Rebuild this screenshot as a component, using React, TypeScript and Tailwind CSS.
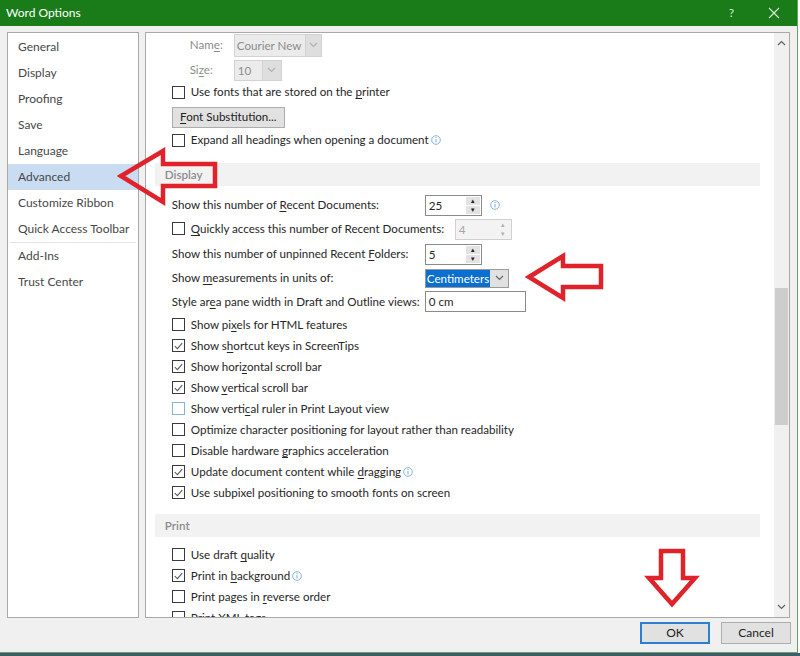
import type { ReactNode } from 'react';

const NAV_TOP = ['General', 'Display', 'Proofing', 'Save', 'Language', 'Advanced', 'Customize Ribbon', 'Quick Access Toolbar'];
const NAV_BOTTOM = ['Add-Ins', 'Trust Center'];

const Info = () => (
  <svg width="10" height="10" viewBox="0 0 10 10" className="ml-[2px] inline-block align-[-1px]">
    <circle cx="5" cy="5" r="4.3" fill="none" stroke="#7aa7d6" strokeWidth="0.9" />
    <path d="M5 4.2v3.2" stroke="#7aa7d6" strokeWidth="1" />
    <circle cx="5" cy="2.7" r="0.6" fill="#7aa7d6" />
  </svg>
);

const Box = ({ checked = false, blue = false }: { checked?: boolean; blue?: boolean }) => (
  <span
    className={`flex size-[13px] shrink-0 items-center justify-center border bg-white ${
      blue ? 'border-[#86b6cc]' : 'border-[#3a3a3a]'
    }`}
  >
    {checked && (
      <svg width="9" height="8" viewBox="0 0 9 8">
        <path d="M0.8 4.2 L3.4 6.6 L8.2 1.2" fill="none" stroke="#5a5a5a" strokeWidth="1.1" />
      </svg>
    )}
  </span>
);

const CheckRow = ({
  children,
  checked,
  blue,
  info,
}: {
  children: ReactNode;
  checked?: boolean;
  blue?: boolean;
  info?: boolean;
}) => (
  <div className="flex h-[21px] shrink-0 items-center gap-[6px] pl-[26px]">
    <Box checked={checked} blue={blue} />
    <span className="whitespace-nowrap">
      {children}
      {info && <Info />}
    </span>
  </div>
);

const Spin = ({ value, disabled = false }: { value: string; disabled?: boolean }) => (
  <div
    className={`flex h-[21px] w-[57px] shrink-0 border ${
      disabled ? 'border-[#d0d0d0] bg-[#f3f3f3] text-[#a6a6a6]' : 'border-[#8a8a8a] bg-white'
    }`}
  >
    <span className="flex-1 pl-[3px] leading-[19px]">{value}</span>
    <div className="flex w-[16px] flex-col gap-[1px] p-[1px]">
      <span
        className={`flex flex-1 items-center justify-center text-[6px] leading-none ${
          disabled ? 'bg-[#f3f3f3] text-[#b0b0b0]' : 'bg-[#e3e3e3] text-[#222]'
        }`}
      >
        ▲
      </span>
      <span
        className={`flex flex-1 items-center justify-center text-[6px] leading-none ${
          disabled ? 'bg-[#f3f3f3] text-[#b0b0b0]' : 'bg-[#e3e3e3] text-[#222]'
        }`}
      >
        ▼
      </span>
    </div>
  </div>
);

const Chevron = ({ color = '#555', up = false }: { color?: string; up?: boolean }) => (
  <svg width="9" height="6" viewBox="0 0 9 6">
    <path d={up ? 'M1 5 L4.5 1.5 L8 5' : 'M1 1 L4.5 4.5 L8 1'} fill="none" stroke={color} strokeWidth="1.2" />
  </svg>
);

const Header = ({ children }: { children: ReactNode }) => (
  <div className="ml-[9px] mr-[14px] flex h-[23px] items-center bg-[#f2f2f2] pl-[10px] font-semibold text-[#8b8b8b]">
    {children}
  </div>
);

export default function App() {
  return (
    <div className="flex h-[656px] w-[800px] flex-col bg-white font-[family-name:Lato,'Noto_Sans',sans-serif] text-[11.6px] text-[#262626]">
      <div className="flex h-[653px] w-[798px] flex-col border-b border-r border-[#63a463] bg-[#f0f0f0]">
        {/* Title bar */}
        <div className="flex h-[26px] shrink-0 items-center bg-[#197c19] pl-[6px] pr-[17px] text-[12px] text-white">
          <span className="flex-1">Word Options</span>
          <span className="mr-[34px] text-[12px] text-[#d6ecd6]">?</span>
          <svg width="12" height="12" viewBox="0 0 12 12">
            <path d="M1 1 L11 11 M11 1 L1 11" stroke="#d6ecd6" strokeWidth="1.2" />
          </svg>
        </div>

        <div className="flex h-[592px] shrink-0 gap-[6px] px-[7px] pt-[6px]">
          {/* Left nav */}
          <div className="flex w-[132px] flex-col border border-[#a9a9a9] bg-white pt-[1px] text-[12px] text-[#474747]">
            {NAV_TOP.map((item) => (
              <div
                key={item}
                className={`flex h-[26px] shrink-0 items-center pl-[10px] ${item === 'Advanced' ? 'bg-[#c9dcf2]' : ''}`}
              >
                {item}
              </div>
            ))}
            <div className="mx-[2px] h-[1px] shrink-0 bg-[#e3e3e3]" />
            {NAV_BOTTOM.map((item) => (
              <div key={item} className="flex h-[26px] shrink-0 items-center pl-[10px]">
                {item}
              </div>
            ))}
          </div>

          {/* Content */}
          <div className="flex w-[646px] overflow-hidden border border-[#a9a9a9] bg-white">
            <div className="flex min-w-0 flex-1 flex-col">
              <div className="flex h-[24px] shrink-0 items-center">
                <span className="w-[78px] pr-[1px] text-right text-[#8c8c8c]">
                  Nam<u className="underline-offset-2">e</u>:
                </span>
                <div className="ml-[10px] flex h-[23px] w-[88px] border border-[#d2d2d2] bg-[#ebebeb] text-[#8c8c8c]">
                  <span className="flex-1 whitespace-nowrap pl-[2px] leading-[21px]">Courier New</span>
                  <span className="flex w-[16px] items-center justify-center border-l border-[#d2d2d2] bg-[#dedede]">
                    <Chevron color="#b0b0b0" />
                  </span>
                </div>
              </div>
              <div className="flex h-[26px] shrink-0 items-center">
                <span className="w-[78px] pr-[11px] text-right text-[#8c8c8c]">
                  Si<u className="underline-offset-2">z</u>e:
                </span>
                <div className="ml-[10px] flex h-[21px] w-[48px] border border-[#d2d2d2] bg-[#ebebeb] text-[#8c8c8c]">
                  <span className="flex-1 pl-[3px] leading-[19px]">10</span>
                  <span className="flex w-[19px] items-center justify-center border-l border-[#d2d2d2] bg-[#dedede]">
                    <Chevron color="#b0b0b0" />
                  </span>
                </div>
              </div>
              <div className="flex h-[18px] shrink-0 items-center gap-[6px] pl-[26px]">
                <Box />
                <span className="whitespace-nowrap">
                  Use fonts that are stored on the <u className="underline-offset-2">p</u>rinter
                </span>
              </div>
              <div className="flex h-[32px] shrink-0 items-center pl-[26px]">
                <button
                  type="button"
                  className="h-[21px] w-[113px] border border-[#adadad] bg-[#e1e1e1] text-center text-[#222]"
                >
                  <span className="whitespace-nowrap">
                    <u className="underline-offset-2">F</u>ont Substitution...
                  </span>
                </button>
              </div>
              <div className="flex h-[14px] shrink-0 items-center gap-[6px] pl-[26px]">
                <Box />
                <span className="whitespace-nowrap">
                  Expand all headings when opening a document
                  <Info />
                </span>
              </div>

              <div className="mt-[16px] shrink-0">
                <Header>Display</Header>
              </div>

              <div className="mt-[7px] flex h-[24px] shrink-0 items-center pl-[26px]">
                <span className="w-[253px] whitespace-nowrap">
                  Show this number of <u className="underline-offset-2">R</u>ecent Documents:
                </span>
                <Spin value="25" />
                <span className="ml-[6px]">
                  <Info />
                </span>
              </div>
              <div className="flex h-[24px] shrink-0 items-center pl-[26px]">
                <div className="flex w-[283px] items-center gap-[6px]">
                  <Box />
                  <span className="whitespace-nowrap">
                    <u className="underline-offset-2">Q</u>uickly access this number of Recent Documents:
                  </span>
                </div>
                <Spin value="4" disabled />
              </div>
              <div className="flex h-[26px] shrink-0 items-center pl-[26px]">
                <span className="w-[253px] whitespace-nowrap">
                  Show this number of unpinned Recent <u className="underline-offset-2">F</u>olders:
                </span>
                <Spin value="5" />
              </div>
              <div className="flex h-[22px] shrink-0 items-center pl-[26px]">
                <span className="w-[253px] whitespace-nowrap">
                  Show <u className="underline-offset-2">m</u>easurements in units of:
                </span>
                <div className="flex h-[19px] w-[84px] border border-[#9a9a9a] bg-white">
                  <span className="whitespace-nowrap bg-[#0a6fce] px-[1px] leading-[17px] text-white">Centimeters</span>
                  <span className="flex flex-1 items-center justify-center bg-[#e1e1e1]">
                    <Chevron color="#666" />
                  </span>
                </div>
              </div>
              <div className="flex h-[25px] shrink-0 items-center pl-[26px]">
                <span className="w-[253px] whitespace-nowrap">
                  Style ar<u className="underline-offset-2">e</u>a pane width in Draft and Outline views:
                </span>
                <div className="h-[21px] w-[101px] border border-[#8a8a8a] bg-white pl-[3px] leading-[19px]">0 cm</div>
              </div>

              <CheckRow>
                Show pi<u className="underline-offset-2">x</u>els for HTML features
              </CheckRow>
              <CheckRow checked>
                Show s<u className="underline-offset-2">h</u>ortcut keys in ScreenTips
              </CheckRow>
              <CheckRow checked>
                Show hori<u className="underline-offset-2">z</u>ontal scroll bar
              </CheckRow>
              <CheckRow checked>
                Show <u className="underline-offset-2">v</u>ertical scroll bar
              </CheckRow>
              <CheckRow blue>
                Show verti<u className="underline-offset-2">c</u>al ruler in Print Layout view
              </CheckRow>
              <CheckRow>Optimize character positioning for layout rather than readability</CheckRow>
              <CheckRow>
                Disable hardware <u className="underline-offset-2">g</u>raphics acceleration
              </CheckRow>
              <CheckRow checked info>
                Update document content while <u className="underline-offset-2">d</u>ragging
              </CheckRow>
              <CheckRow checked>Use subpixel positioning to smooth fonts on screen</CheckRow>

              <div className="mt-[11px] shrink-0">
                <Header>Print</Header>
              </div>
              <div className="mt-[7px] flex shrink-0 flex-col">
                <CheckRow>
                  Use draft <u className="underline-offset-2">q</u>uality
                </CheckRow>
                <CheckRow checked info>
                  Print in <u className="underline-offset-2">b</u>ackground
                </CheckRow>
                <CheckRow>
                  Print pages in <u className="underline-offset-2">r</u>everse order
                </CheckRow>
                <CheckRow>
                  Print <u className="underline-offset-2">X</u>ML tags
                </CheckRow>
              </div>
            </div>

            {/* Scrollbar */}
            <div className="flex w-[15px] shrink-0 flex-col items-center bg-[#f0f0f0]">
              <div className="flex h-[20px] items-center justify-center">
                <Chevron up color="#606060" />
              </div>
              <div className="mt-[235px] h-[137px] w-[13px] bg-[#cdcdcd]" />
              <div className="flex-1" />
              <div className="flex h-[20px] items-center justify-center">
                <Chevron color="#606060" />
              </div>
            </div>
          </div>
        </div>

        {/* Footer */}
        <div className="flex h-[34px] shrink-0 items-start justify-end gap-[11px] pr-[6px] pt-[4px] text-[12px]">
          <button type="button" className="h-[22px] w-[70px] border-2 border-[#2b7fd0] bg-[#e1e1e1] text-[#222]">
            OK
          </button>
          <button type="button" className="h-[22px] w-[70px] border border-[#adadad] bg-[#e1e1e1] text-[#222]">
            Cancel
          </button>
        </div>
      </div>
      <div className="h-[3px] bg-[#3f5a68]" />

      {/* Red annotation arrows */}
      <svg className="pointer-events-none absolute left-0 top-0" width="800" height="656">
        <g fill="none" stroke="#e0222b" strokeWidth="4.5" strokeLinejoin="miter">
          <polygon points="121,176 163,151 163,164 215,164 215,186 163,186 163,202" />
          <polygon points="529,277 563,256 563,266 601,266 601,287 563,287 563,298" />
          <polygon points="661,551 683,551 683,578 695,578 672,604 649,578 661,578" />
        </g>
      </svg>
    </div>
  );
}
